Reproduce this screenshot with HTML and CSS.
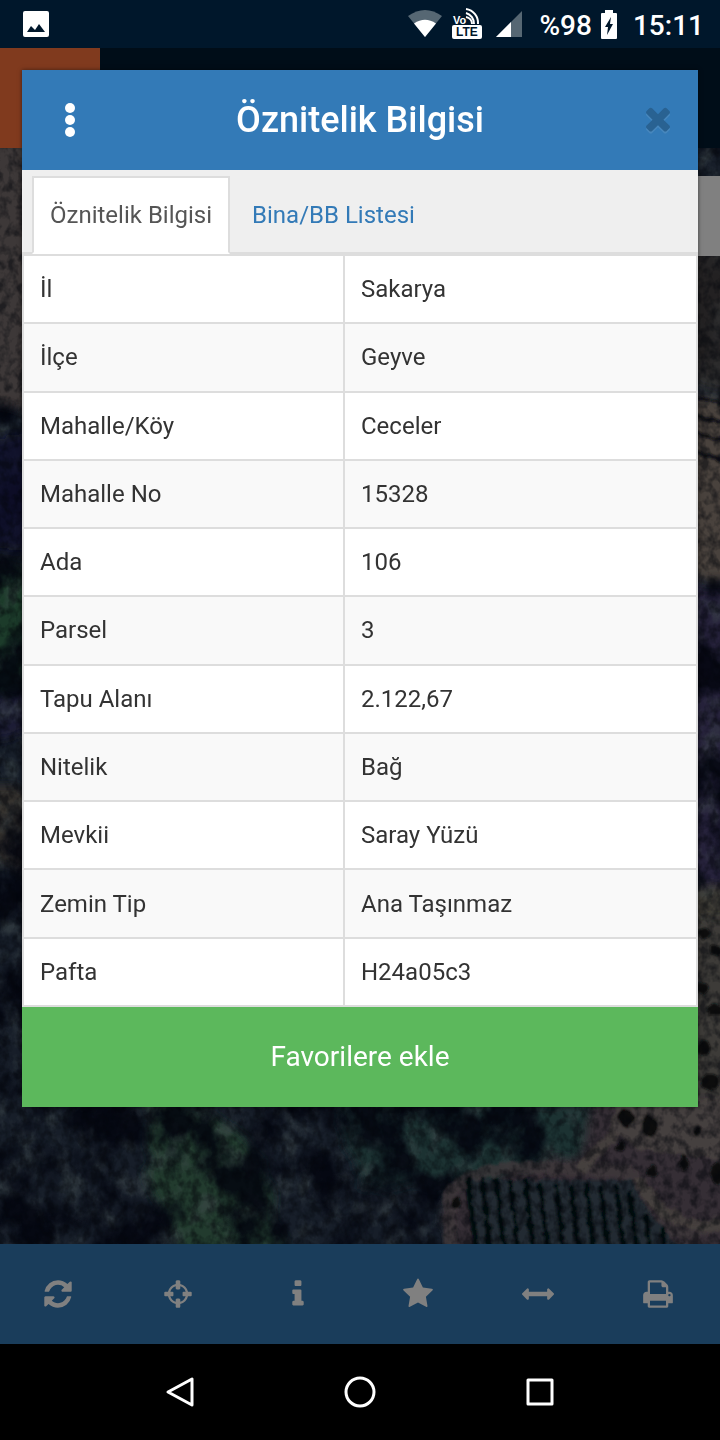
FILE: index.html
```html
<!DOCTYPE html>
<html lang="tr">
<head>
<meta charset="utf-8">
<meta name="viewport" content="width=device-width, initial-scale=1">
<title>Öznitelik Bilgisi</title>
<link rel="stylesheet" href="styles.css">
</head>
<body>
<div class="screen">
  <header class="status-bar">
    <svg class="status-photo" viewBox="0 0 26 26" width="26" height="26" aria-hidden="true"><path fill="#fff" fill-rule="evenodd" d="M2 0h22a2 2 0 0 1 2 2v22a2 2 0 0 1-2 2H2a2 2 0 0 1-2-2V2a2 2 0 0 1 2-2zM4 21h18l-6-8-4 6-4-4z"/></svg>
    <svg class="status-wifi" viewBox="0 0 34 28" width="34" height="28" aria-hidden="true"><path fill="#566773" d="M0 6Q17-6 34 6L17 27z"/><path fill="#fff" d="M6 13.500Q17 6 28 13.500L17 27z"/></svg>
    <svg class="status-lte" viewBox="0 0 30 32" width="30" height="32" role="img" aria-label="VoLTE">
      <text class="lte-vo" x="1" y="16">Vo</text>
      <path fill="none" stroke="#fff" stroke-width="2" d="M14 9a7 7 0 0 1 6 7M14 5a11 11 0 0 1 8 11M14 1a14 14 0 0 1 12 15"/>
      <path fill="#fff" d="M2 17h26q2 0 2 2v10q0 2-2 2H2q-2 0-2-2V19q0-2 2-2z"/>
      <text class="lte-label" x="4" y="28">LTE</text>
    </svg>
    <svg class="status-signal" viewBox="0 0 26 26" width="26" height="26" aria-hidden="true"><path fill="#566773" d="M26 0v26H0z"/><path fill="#fff" d="M15 11v15H0z"/></svg>
    <span class="status-percent">%98</span>
    <svg class="status-battery" viewBox="0 0 16 29" width="16" height="29" aria-hidden="true"><path fill="#fff" fill-rule="evenodd" d="M4 0h8v3h3a1 1 0 0 1 1 1v24a1 1 0 0 1-1 1H1a1 1 0 0 1-1-1V4a1 1 0 0 1 1-1h3zM10 7l-6 10h3l-1 8 6-11H9z"/></svg>
    <time class="status-clock">15:11</time>
  </header>

  <div class="app">
    <div class="app-header"><div class="app-logo"></div></div>
    <div class="map">
      <svg class="map-image" viewBox="0 0 720 1096" preserveAspectRatio="xMidYMid slice" aria-hidden="true">
        <defs>
          <filter id="rough" x="-5%" y="-5%" width="110%" height="110%"><feTurbulence type="fractalNoise" baseFrequency="0.03" numOctaves="4" seed="4" result="n"/><feDisplacementMap in="SourceGraphic" in2="n" scale="30"/><feGaussianBlur stdDeviation="5"/></filter>
          <filter id="edge" x="-5%" y="-5%" width="110%" height="110%"><feTurbulence type="fractalNoise" baseFrequency="0.12" numOctaves="2" seed="7" result="n"/><feDisplacementMap in="SourceGraphic" in2="n" scale="7" xChannelSelector="R" yChannelSelector="G"/><feGaussianBlur stdDeviation="1.200"/></filter>
          <filter id="shade" x="0" y="0" width="100%" height="100%" color-interpolation-filters="sRGB"><feTurbulence type="fractalNoise" baseFrequency="0.022 0.018" numOctaves="5" seed="11"/><feColorMatrix values="0 0 0 0 0.010 0 0 0 0 0.020 0 0 0 0 0.060 4 0 0 0 -1.700"/></filter>
          <filter id="leaf" x="0" y="0" width="100%" height="100%" color-interpolation-filters="sRGB"><feTurbulence type="fractalNoise" baseFrequency="0.050 0.040" numOctaves="5" seed="23"/><feColorMatrix values="0 0 0 0 0.260 0 0 0 0 0.300 0 0 0 0 0.310 0 3 0 0 -1.400"/></filter>
          <filter id="grain" x="0" y="0" width="100%" height="100%" color-interpolation-filters="sRGB"><feTurbulence type="fractalNoise" baseFrequency="0.110 0.090" numOctaves="3" seed="31"/><feColorMatrix values="0 0 0 0 0.010 0 0 0 0 0.020 0 0 0 0 0.040 3 0 0 0 -1.200"/></filter>
        </defs>
        <rect width="720" height="1096" fill="#171e29"/>
        <g filter="url(#rough)">
          <path fill="#36302f" d="M-30 640H50V720H-30z"/>
          <path fill="#1a3a2b" d="M-30 420H50V550H-30z"/>
          <path fill="#1b1c35" d="M-30 540H50V590H-30z"/>
          <path fill="#28243a" d="M670 440H750V740H670z"/>
          <path fill="#3e3a36" d="M670 740H750V950L600 930 640 830z"/>
          <path fill="#203a2d" d="M150 950Q220 950 260 1010L285 1110H180L150 1030z"/>
          <path fill="#1b3130" d="M340 950H600V1040H360z"/>
          <path fill="#353035" d="M610 980H735V1110H640z"/>
        </g>
        <rect width="720" height="1096" filter="url(#leaf)" opacity="0.5"/>
        <rect width="720" height="1096" filter="url(#shade)" opacity="0.85"/>
        <g filter="url(#rough)">
          <path fill="#3d3937" d="M-30-30H50V270L-30 250z"/>
          <path fill="#10122a" d="M-30 290H50V400H-30z" opacity="0.8"/>
          <path fill="#36322f" d="M670 100H750V240H670z" opacity="0.6"/>
          <path fill="#48433c" d="M670 255H750V430H670z"/>
          <path fill="#3e3a37" d="M680 770H750V990H680z"/>
          <path fill="#352f34" d="M590 950H750V1110H450V1040L580 1010z"/>
        </g>
        <g filter="url(#edge)">
          <path fill="#4b4642" d="M618 950h112v62l-90-10-30-20z" opacity="0.8"/>
          <path fill="none" stroke="#403a3b" stroke-width="13" d="M450 1105V1045Q470 1020 525 1020T625 1023Q650 1040 665 1070T725 1070" opacity="0.8"/>
          <path fill="none" stroke="#49423f" stroke-width="12" d="M580 1022L615 985M640 1030Q655 1080 725 1078" opacity="0.8"/>
          <path fill="#222b31" d="M466 1032H632L645 1060 680 1100H478z"/>
          <g fill="none" stroke="#04080f" stroke-width="5"><path d="M468 1030l8 70M482 1030l8 70M496 1030l8 70M510 1032l8 70M525 1030l8 70M540 1034l8 70M556 1036l8 70M571 1036l8 70M586 1036l8 70M601 1038l8 70M616 1036l8 70M630 1042l8 70M646 1065l4 40M662 1080l4 30"/></g>
          <path fill="none" stroke="#0b0e12" stroke-width="4" d="M696 250l30 6M696 268l30 7M696 285l30 8M696 304l30 9"/>
          <g fill="#090c10"><ellipse cx="704" cy="785" rx="7" ry="5"/><ellipse cx="716" cy="803" rx="6" ry="5"/><ellipse cx="702" cy="840" rx="7" ry="7"/><ellipse cx="715" cy="862" rx="8" ry="6"/><ellipse cx="704" cy="900" rx="8" ry="7"/><ellipse cx="710" cy="934" rx="9" ry="8"/><ellipse cx="626" cy="970" rx="8" ry="9"/><ellipse cx="650" cy="978" rx="8" ry="11"/><ellipse cx="698" cy="983" rx="4" ry="5"/><ellipse cx="620" cy="999" rx="5" ry="5"/><ellipse cx="652" cy="1023" rx="5" ry="7"/><ellipse cx="684" cy="1015" rx="4" ry="9"/><ellipse cx="717" cy="1025" rx="7" ry="12"/><ellipse cx="456" cy="1054" rx="5" ry="7"/></g>
        </g>
        <rect width="720" height="1096" filter="url(#grain)" opacity="0.5"/>
      </svg>
      <div class="map-panel-handle"></div>
    </div>
    <nav class="toolbar" aria-label="Harita araçları">
      <button class="tool" type="button" aria-label="Yenile"><svg class="tool-icon" viewBox="0 0 1792 1792"><path d="M1639 1056q0 5-1 7-64 268-268 434.500t-478 166.500q-146 0-282.500-55t-243.500-157l-129 129q-19 19-45 19t-45-19-19-45v-448q0-26 19-45t45-19h448q26 0 45 19t19 45-19 45l-137 137q71 66 161 102t187 36q134 0 250-65t186-179q11-17 53-117 8-23 30-23h192q13 0 22.500 9.500t9.500 22.500zm25-800v448q0 26-19 45t-45 19h-448q-26 0-45-19t-19-45 19-45l138-138q-148-137-349-137-134 0-250 65t-186 179q-11 17-53 117-8 23-30 23h-199q-13 0-22.500-9.500t-9.500-22.500v-7q65-268 270-434.500t480-166.500q146 0 284 55.500t245 156.500l130-129q19-19 45-19t45 19 19 45z"/></svg></button>
      <button class="tool" type="button" aria-label="Konum"><svg class="tool-icon" viewBox="0 0 1792 1792"><path d="M1325 1024h-109q-26 0-45-19t-19-45v-128q0-26 19-45t45-19h109q-32-108-112.500-188.500t-188.500-112.500v109q0 26-19 45t-45 19h-128q-26 0-45-19t-19-45v-109q-108 32-188.500 112.500t-112.500 188.500h109q26 0 45 19t19 45v128q0 26-19 45t-45 19h-109q32 108 112.500 188.500t188.500 112.500v-109q0-26 19-45t45-19h128q26 0 45 19t19 45v109q108-32 188.500-112.500t112.500-188.500zm339-192v128q0 26-19 45t-45 19h-143q-37 161-154.500 278.500t-278.500 154.500v143q0 26-19 45t-45 19h-128q-26 0-45-19t-19-45v-143q-161-37-278.500-154.500t-154.500-278.500h-143q-26 0-45-19t-19-45v-128q0-26 19-45t45-19h143q37-161 154.500-278.500t278.500-154.500v-143q0-26 19-45t45-19h128q26 0 45 19t19 45v143q161 37 278.500 154.500t154.500 278.500h143q26 0 45 19t19 45z"/></svg></button>
      <button class="tool" type="button" aria-label="Bilgi"><svg class="tool-icon" viewBox="0 0 1792 1792"><path d="M1216 1344v128q0 26-19 45t-45 19h-512q-26 0-45-19t-19-45v-128q0-26 19-45t45-19h64v-384h-64q-26 0-45-19t-19-45v-128q0-26 19-45t45-19h384q26 0 45 19t19 45v576h64q26 0 45 19t19 45zm-128-1152v192q0 26-19 45t-45 19h-256q-26 0-45-19t-19-45v-192q0-26 19-45t45-19h256q26 0 45 19t19 45z"/></svg></button>
      <button class="tool" type="button" aria-label="Favoriler"><svg class="tool-icon" viewBox="0 0 1792 1792"><path d="M1728 647q0 22-26 48l-363 354 86 500q1 7 1 20 0 21-10.500 35.500t-30.500 14.500q-19 0-40-12l-449-236-449 236q-22 12-40 12-21 0-31.500-14.500t-10.500-35.500q0-6 2-20l86-500-364-354q-25-27-25-48 0-37 56-46l502-73 225-455q19-41 49-41t49 41l225 455 502 73q56 9 56 46z"/></svg></button>
      <button class="tool" type="button" aria-label="Ölçüm"><svg class="tool-icon" viewBox="0 0 1792 1792"><path d="M1792 896q0 26-19 45l-256 256q-19 19-45 19t-45-19-19-45v-128h-1024v128q0 26-19 45t-45 19-45-19l-256-256q-19-19-19-45t19-45l256-256q19-19 45-19t45 19 19 45v128h1024v-128q0-26 19-45t45-19 45 19l256 256q19 19 19 45z"/></svg></button>
      <button class="tool" type="button" aria-label="Yazdır"><svg class="tool-icon" viewBox="0 0 1792 1792"><path d="M448 1536h896v-256h-896v256zm0-640h896v-384h-160q-40 0-68-28t-28-68v-160h-640v640zm1152 64q0-26-19-45t-45-19-45 19-19 45 19 45 45 19 45-19 19-45zm128 0v416q0 13-9.500 22.500t-22.500 9.500h-224v160q0 40-28 68t-68 28h-960q-40 0-68-28t-28-68v-160h-224q-13 0-22.500-9.500t-9.500-22.500v-416q0-79 56.500-135.500t135.500-56.500h64v-544q0-40 28-68t68-28h672q40 0 88 20t76 48l152 152q28 28 48 76t20 88v256h64q79 0 135.500 56.500t56.500 135.500z"/></svg></button>
    </nav>

    <section class="dialog" role="dialog" aria-labelledby="dialog-title">
      <div class="dialog-header">
        <button class="dialog-button" type="button" aria-label="Menü"><svg viewBox="0 0 10 34" width="10" height="34"><g fill="#fff"><circle cx="5" cy="5" r="5"/><circle cx="5" cy="17" r="5"/><circle cx="5" cy="29" r="5"/></g></svg></button>
        <h1 class="dialog-title" id="dialog-title">Öznitelik Bilgisi</h1>
        <button class="dialog-button dialog-close" type="button" aria-label="Kapat"><svg class="close-icon" viewBox="0 80 1792 1792"><path d="M1490 1322q0 40-28 68l-136 136q-28 28-68 28t-68-28l-294-294-294 294q-28 28-68 28t-68-28l-136-136q-28-28-28-68t28-68l294-294-294-294q-28-28-28-68t28-68l136-136q28-28 68-28t68 28l294 294 294-294q28-28 68-28t68 28l136 136q28 28 28 68t-28 68l-294 294 294 294q28 28 28 68z"/></svg></button>
      </div>
      <nav class="tabs">
        <a class="tab tab-active" href="#oznitelik" aria-current="true">Öznitelik Bilgisi</a>
        <a class="tab" href="#bina">Bina/BB Listesi</a>
      </nav>
      <table class="attributes" id="oznitelik">
        <tbody>
          <tr><th scope="row">İl</th><td>Sakarya</td></tr>
          <tr><th scope="row">İlçe</th><td>Geyve</td></tr>
          <tr><th scope="row">Mahalle/Köy</th><td>Ceceler</td></tr>
          <tr><th scope="row">Mahalle No</th><td>15328</td></tr>
          <tr><th scope="row">Ada</th><td>106</td></tr>
          <tr><th scope="row">Parsel</th><td>3</td></tr>
          <tr><th scope="row">Tapu Alanı</th><td>2.122,67</td></tr>
          <tr><th scope="row">Nitelik</th><td>Bağ</td></tr>
          <tr><th scope="row">Mevkii</th><td>Saray Yüzü</td></tr>
          <tr><th scope="row">Zemin Tip</th><td>Ana Taşınmaz</td></tr>
          <tr><th scope="row">Pafta</th><td>H24a05c3</td></tr>
        </tbody>
      </table>
      <button class="favorite" type="button">Favorilere ekle</button>
    </section>
  </div>

  <nav class="system-nav" aria-label="Sistem">
    <button class="system-button" type="button" aria-label="Geri"><svg viewBox="0 0 32 32" width="32" height="32"><path d="M28 3v26L4 16z"/></svg></button>
    <button class="system-button" type="button" aria-label="Ana ekran"><svg viewBox="0 0 32 32" width="32" height="32"><circle cx="16" cy="16" r="14"/></svg></button>
    <button class="system-button" type="button" aria-label="Son uygulamalar"><svg viewBox="0 0 32 32" width="32" height="32"><path d="M4 4h24v24H4z"/></svg></button>
  </nav>
</div>
</body>
</html>
```

FILE: styles.css
```css
* {
  box-sizing: border-box;
}

body {
  margin: 0;
  background: #000;
  font-family: Roboto, "Liberation Sans", sans-serif;
  font-size: 24px;
  line-height: 34px;
  color: #333;
}

button {
  padding: 0;
  border: 0;
  background: none;
  font: inherit;
}

svg {
  display: block;
}

.screen {
  display: flex;
  flex-direction: column;
  min-height: 100vh;
}

/* Status bar */
.status-bar {
  display: flex;
  align-items: center;
  height: 48px;
  padding: 0 16px 0 23px;
  background: #00172b;
  color: #fff;
  font-size: 28px;
  font-weight: 500;
}

.status-photo {
  margin-right: auto;
}

.status-wifi {
  margin-right: 10px;
}

.status-battery {
  margin-right: 16px;
}

.status-lte {
  margin-right: 14px;
}

.status-signal {
  margin-right: 18px;
}

.status-percent {
  margin-right: 9px;
}

.status-percent,
.status-clock {
  padding-top: 4px;
}

.lte-vo {
  fill: #fff;
  font: bold 11px "Liberation Sans", sans-serif;
}

.lte-label {
  fill: #00172b;
  font: bold 12px "Liberation Sans", sans-serif;
}

/* Application behind the dialog */
.app {
  position: relative;
  display: flex;
  flex: 1;
  flex-direction: column;
}

.app-header {
  display: flex;
  height: 100px;
  background: #000d18;
}

.app-logo {
  width: 100px;
  background: #803a1e;
}

.map {
  position: relative;
  flex: 1;
  overflow: hidden;
  background: #131a23;
}

.map-image {
  position: absolute;
  inset: 0;
  width: 100%;
  height: 100%;
}

.map-panel-handle {
  position: absolute;
  top: 28px;
  right: 0;
  width: 80px;
  height: 80px;
  background: #808080;
}

.toolbar {
  display: flex;
  height: 100px;
  background: #1a3d5b;
}

.tool {
  display: flex;
  flex: 1;
  align-items: center;
  justify-content: center;
  padding-right: 4px;
}

.tool-icon {
  width: 32px;
  height: 32px;
  fill: #808080;
}

/* Dialog */
.dialog {
  position: absolute;
  top: 22px;
  left: 22px;
  right: 22px;
  background: #fff;
  box-shadow: 0 0 4px rgba(0, 0, 0, 0.5);
}

.dialog-header {
  display: flex;
  align-items: center;
  height: 100px;
  background: #337ab7;
}

.dialog-button {
  display: flex;
  align-items: center;
  justify-content: center;
  width: 96px;
  height: 100px;
}

.dialog-close {
  width: 80px;
  margin-left: 16px;
}

.close-icon {
  width: 36px;
  height: 36px;
  fill: #296292;
  filter: drop-shadow(0 2px 0 #4787bd);
}

.dialog-title {
  flex: 1;
  margin: 0;
  color: #fff;
  font-size: 36px;
  font-weight: 500;
  line-height: 40px;
  text-align: center;
}

.tabs {
  display: flex;
  gap: 4px;
  padding: 6px 10px 0;
  border-bottom: 2px solid #ddd;
  background: #efefef;
}

.tab {
  margin-bottom: -2px;
  padding: 20px 16px;
  border: 2px solid transparent;
  color: #337ab7;
  text-decoration: none;
}

.tab-active {
  border-color: #ddd;
  border-bottom-color: #fff;
  background: #fff;
  color: #555;
}

.attributes {
  width: 100%;
  height: 753px;
  border-collapse: collapse;
  table-layout: fixed;
}

.attributes th,
.attributes td {
  padding: 16px;
  border: 2px solid #ddd;
  font-weight: 400;
  text-align: left;
}

.attributes th {
  width: 321px;
}

.attributes tr:nth-child(even) {
  background: #f9f9f9;
}

.favorite {
  display: block;
  width: 100%;
  height: 100px;
  background: #5cb85c;
  color: #fff;
  font-size: 28px;
}

/* Android navigation */
.system-nav {
  display: flex;
  height: 96px;
  padding: 0 12.5%;
  background: #000;
}

.system-button {
  display: flex;
  flex: 1;
  align-items: center;
  justify-content: center;
}

.system-button svg {
  fill: none;
  stroke: #fff;
  stroke-width: 3;
  stroke-linejoin: round;
}
```
